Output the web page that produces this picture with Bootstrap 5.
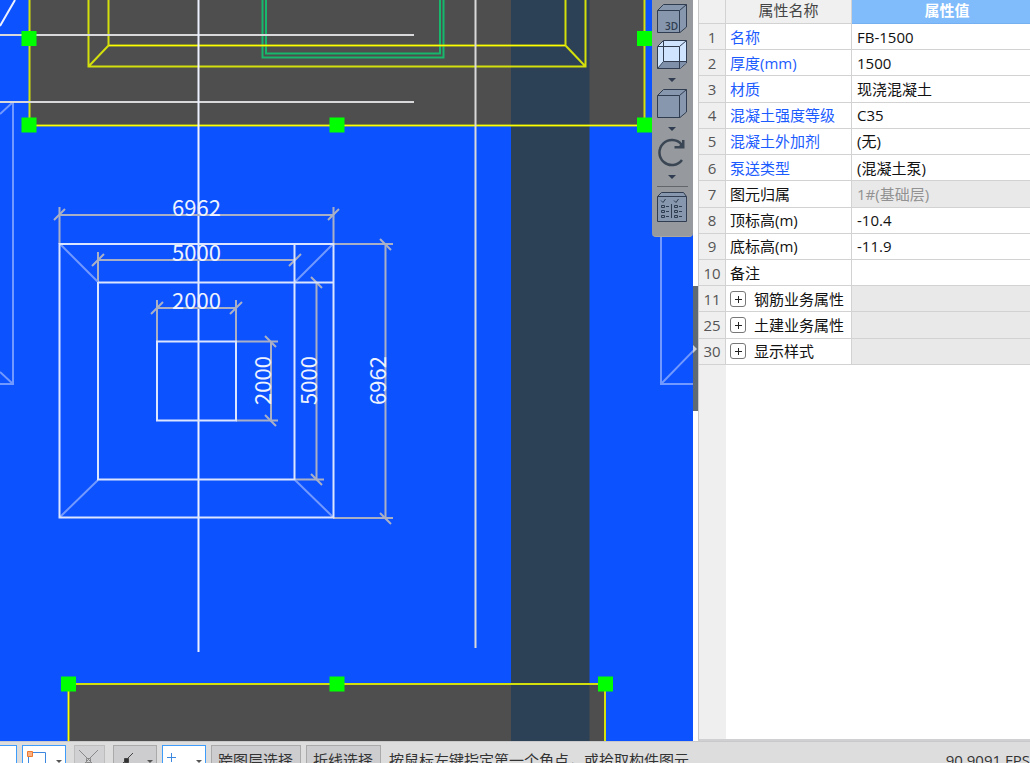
<!DOCTYPE html>
<html lang="zh-CN">
<head>
<meta charset="utf-8">
<meta name="viewport" content="width=device-width, initial-scale=1">
<title>属性编辑</title>
<link rel="stylesheet" href="https://cdn.jsdelivr.net/npm/bootstrap@5.3.0/dist/css/bootstrap.min.css">
<style>
body{font-family:"Open Sans","Noto Sans CJK SC",sans-serif;font-size:15px;line-height:20px;color:#111;background:#fff}
.drawing{background:#0c52ff;min-width:0}
.drawing>svg text{font-family:"Noto Sans CJK SC",sans-serif;font-size:22px;fill:#eef3ff}
.view-tools{top:0;right:0;width:41px;background:#96999d;border-radius:0 0 4px 4px;padding-bottom:8px;border-bottom:1px solid #aaa79f}
.view-tools button,.expander,.snap{border:0;background:none;padding:0}
.view-tools button{display:block;width:41px}
.view-tools svg{display:block}
.view-tools text{font-family:"Open Sans",sans-serif;font-size:10px;font-weight:600;fill:#303d50;stroke:none}
.view-tools hr{margin:2px 5px 0;border-top:1px solid #62666b;opacity:1}
.splitter{width:5px;padding-bottom:44px}
.splitter button{border:0;padding:0;width:5px;height:125px;background:#5f6974}
.splitter svg{display:block}
.props{width:332px;border-left:1px solid #c8c8c8;border-bottom:2px solid #d0d0d2;background:linear-gradient(90deg,#efefef 27px,#fff 27px)}
.prop-grid{table-layout:fixed;width:344px;height:365px;border-collapse:separate;border-spacing:0}
.prop-grid th,.prop-grid td{border-right:1px solid #d2d2d2;border-bottom:1px solid #d2d2d2;padding:0 5px;font-weight:400;white-space:nowrap;height:26px;vertical-align:middle}
.prop-grid thead th{height:24px;padding-bottom:3px;text-align:center;background:#f0f0f0;color:#444}
.prop-grid thead th:last-child{background:#80bbfb;color:#fff;font-weight:700;border-color:#74b0f2}
.prop-grid tbody th{background:#efefef;color:#555;text-align:center;padding:0}
.prop-grid td:nth-child(2){background:#fff;padding-left:4px}
.prop-grid td:last-child{border-right:0}
.key-prop{color:#1c5cff}
.prop-grid .locked{background:#e9e9e9;color:#929292}
.expander{width:16px;height:16px;border:1px solid #777;border-radius:3px;background:#fff}
.expander svg{display:block}
.status{height:22px;background:#ddddde;padding-top:3px;border-top:1px solid #c9c9cb;white-space:nowrap;color:#333}
.snap{height:30px;border:1px solid #aaa;background:#cdcdcf;flex:none;color:#333}
.snap.on{background:#fff;border:1px solid #3e9dfa}
.snap.off{border-color:#bdbdbd;background:#d1d1d3}
.snap svg{display:block}
.w-drop{width:44px}.w-icon{width:31px}.w-edge{width:17px;border-left:0!important}
.snap-text{padding:0 7px 0 6px}
.msg{line-height:30px}
.g5{gap:5px}.g8{gap:8px}
</style>
<script src="https://cdn.jsdelivr.net/npm/bootstrap@5.3.0/dist/js/bootstrap.bundle.min.js"></script>
</head>
<body class="d-flex flex-column vh-100 overflow-hidden">
<main class="d-flex flex-grow-1 overflow-hidden">
  <section class="drawing flex-grow-1 position-relative overflow-hidden" aria-label="绘图区">
    <svg width="100%" height="100%" class="d-block" fill="none" stroke-width="2">
      <path fill="#4e4e4e" d="M29 0H645V125H29ZM69 684H605V2000H69Z"/>
      <rect x="511" y="0" width="78.500" height="100%" fill="#2c4056"/>
      <!-- neighbouring footings -->
      <g stroke="#7299ff">
        <path d="M13 102V384H0M0 114L13 102M0 372L13 384M661 230V384H693M661 384L696 348"/>
      </g>
      <!-- sump outlines -->
      <g stroke="#17b76c"><path d="M262.500 0V57.500H443.500V0M266 0V53.500H440V0"/></g>
      <g stroke="#d4e00c">
        <path d="M29.500 0V125.500H644.500V0M88.500 0V66.500H585.500V0M108.500 0V45.500H565.500V0M108.500 45.500L88.500 66.500M565.500 45.500L585.500 66.500M68.500 741V684H605V2000M68.500 741V2000"/>
      </g>
      <g stroke="#ffff00" stroke-width="1"><path d="M109 45.500H565M30 125.500H644M68.500 684V2000"/></g>
      <!-- axes -->
      <g stroke="#d9d9dc"><path d="M0 35H414M0 102H414M475.500 0V648"/></g>
      <path stroke="#eef1ff" d="M198.500 0V652M0 26L15 0"/>
      <!-- dimension lines -->
      <g stroke="#a9b0c6">
        <path d="M59.500 207V244M59.500 215H333.500V207V244M98 252V282M98 260H295M157 300V341M157 308H236M236 300V341M236 341.500H278M236 420.500H278M271 341V420M316.500 282V479M295 479.500H324M333 244H393M333 518H393M385.500 244V518"/>
        <path d="M54 220L65 209M328 220L339 209M92 266L104 254M289 266L301 254M151 314L163 302M230 314L242 302M265 336L276 347M265 415L276 426M311 277L322 288M311 474L322 485M380 239L391 250M380 513L391 524"/>
      </g>
      <path stroke="#7299ff" d="M60 244L98 282M333 244L295 282M98 480L60 517M295 480L333 517"/>
      <path stroke="#dce5ff" d="M59.500 244H333.500V517.500H59.500ZM98 282.500H333M294.500 244V479.500H98V282M157 341.500H236V420.500H157Z"/>
      <g stroke="none">
        <text x="172" y="216">6962</text><text x="172" y="261">5000</text><text x="172" y="309">2000</text>
        <text transform="translate(271 405) rotate(-90)">2000</text>
        <text transform="translate(317 405) rotate(-90)">5000</text>
        <text transform="translate(386 405) rotate(-90)">6962</text>
      </g>
      <path fill="#00ff00" d="M21.500 31h15v15h-15zM21.500 117.500h15v15h-15zM329.500 117.500h15v15h-15zM637 31h15v15h-15zM637 117.500h15v15h-15zM61 676.500h15v15h-15zM329.500 676.500h15v15h-15zM598 676.500h15v15h-15z"/>
    </svg>
    <div class="view-tools position-absolute">
      <button type="button" aria-label="三维"><svg width="41" height="37" stroke="#303d50" fill="#8697ae"><path d="M5.500 10.500L11.500 4.500H34.500V27L28 32.500H5.500ZM5.500 10.500H27.500V32.500M27.500 10.500L34.500 4.500"/><text x="13" y="30">3D</text></svg></button>
      <button type="button" aria-label="线框"><svg width="41" height="49" stroke="#303d50" fill="#cfe4ff"><path d="M5.500 9.500L11.500 3.500H34.500V26L28 31.500H5.500Z"/><path fill="#7f91aa" stroke="none" d="M6 31L12 24.500H34V26L28 31Z"/><path fill="none" d="M5.500 9.500H27.500V31.500M27.500 9.500L34.500 3.500M11.500 3.500V24.500L5.500 31.500M11.500 24.500H34.500"/><path stroke="none" fill="#303d50" d="M16 41H24L20 45Z"/></svg></button>
      <button type="button" aria-label="实体"><svg width="41" height="49" stroke="#303d50" fill="#8697ae"><path d="M5.500 9.500L11.500 3.500H34.500V26L28 31.500H5.500ZM5.500 9.500H27.500V31.500M27.500 9.500L34.500 3.500"/><path stroke="none" fill="#303d50" d="M16 41H24L20 45Z"/></svg></button>
      <button type="button" aria-label="旋转"><svg width="41" height="49" fill="none" stroke="#3a4654"><path stroke-width="2.500" d="M29.500 9.500A12.500 12.500 0 1 0 30 25"/><path stroke="none" fill="#3a4654" d="M32.500 5V13.500H22.500V11H27L30 8V5Z"/><path stroke="none" fill="#303d50" d="M16 40H24L20 44Z"/></svg></button>
      <hr>
      <button type="button" aria-label="显示设置"><svg width="41" height="41" stroke="#303d50" fill="#8697ae"><path d="M5.500 9.500L9.500 5.500H31.500L34.500 9.500V34.500H5.500ZM5.500 9.500H34.500"/><g fill="none"><path d="M9 13.500L11 15.500L13.500 12M22 13.500L24 15.500L26.500 12M19.500 17V31M9.500 18.500h3v2h-3zM9.500 23.500h3v2h-3zM9.500 28.500h3v2h-3zM22.500 18.500h3v2h-3zM22.500 23.500h3v2h-3zM22.500 28.500h3v2h-3zM14 19.500h3M14 24.500h3M14 29.500h3M27 19.500h3M27 24.500h3M27 29.500h3"/></g></svg></button>
    </div>
  </section>
  <div class="splitter d-flex align-items-center flex-shrink-0">
    <button type="button" aria-label="折叠面板"><svg width="5" height="12"><path fill="#c9cdd2" d="M0 2L4 6L0 10Z"/></svg></button>
  </div>
  <aside class="props flex-shrink-0 overflow-hidden">
    <table class="prop-grid">
      <colgroup><col style="width:27px"><col style="width:126px"><col></colgroup>
      <thead><tr><th></th><th>属性名称</th><th>属性值</th></tr></thead>
      <tbody>
        <tr><th>1</th><td class="key-prop">名称</td><td>FB-1500</td></tr>
        <tr><th>2</th><td class="key-prop">厚度(mm)</td><td>1500</td></tr>
        <tr><th>3</th><td class="key-prop">材质</td><td>现浇混凝土</td></tr>
        <tr><th>4</th><td class="key-prop">混凝土强度等级</td><td>C35</td></tr>
        <tr><th>5</th><td class="key-prop">混凝土外加剂</td><td>(无)</td></tr>
        <tr><th>6</th><td class="key-prop">泵送类型</td><td>(混凝土泵)</td></tr>
        <tr><th>7</th><td>图元归属</td><td class="locked">1#(基础层)</td></tr>
        <tr><th>8</th><td>顶标高(m)</td><td>-10.4</td></tr>
        <tr><th>9</th><td>底标高(m)</td><td>-11.9</td></tr>
        <tr><th>10</th><td>备注</td><td></td></tr>
        <tr><th>11</th><td><div class="d-flex align-items-center g8"><button type="button" class="expander" aria-label="展开"><svg width="14" height="14" stroke="#222"><path d="M4 7.500H11M7.500 4V11"/></svg></button>钢筋业务属性</div></td><td class="locked"></td></tr>
        <tr><th>25</th><td><div class="d-flex align-items-center g8"><button type="button" class="expander" aria-label="展开"><svg width="14" height="14" stroke="#222"><path d="M4 7.500H11M7.500 4V11"/></svg></button>土建业务属性</div></td><td class="locked"></td></tr>
        <tr><th>30</th><td><div class="d-flex align-items-center g8"><button type="button" class="expander" aria-label="展开"><svg width="14" height="14" stroke="#222"><path d="M4 7.500H11M7.500 4V11"/></svg></button>显示样式</div></td><td class="locked"></td></tr>
      </tbody>
    </table>
  </aside>
</main>
<footer class="status d-flex flex-shrink-0 align-items-start overflow-hidden g8">
  <div class="d-flex g5">
    <button type="button" class="snap on w-edge" aria-label="点"></button>
    <button type="button" class="snap on w-drop" aria-label="矩形"><svg width="42" height="28" fill="none" stroke="#3c87e0"><path d="M5.500 28V6.500H22.500V28"/><path fill="#f7b183" stroke="#ee7a30" d="M4.500 5.500h5v5h-5z"/><path stroke="none" fill="#555" d="M33 14H39L36 17Z"/></svg></button>
  </div>
  <button type="button" class="snap off w-icon" aria-label="交点"><svg width="29" height="28" fill="none" stroke="#888"><path d="M4 4L25 25M23 4L2 25M11.500 12.500h4v4h-4z"/></svg></button>
  <div class="d-flex g5">
    <button type="button" class="snap w-drop" aria-label="中点"><svg width="42" height="28" stroke="#444"><path d="M19 7L6 20"/><path fill="#333" d="M10.500 12.500h4v4h-4z"/><path stroke="none" fill="#555" d="M33 14H39L36 17Z"/></svg></button>
    <button type="button" class="snap on w-drop" aria-label="偏移"><svg width="42" height="28" stroke="#3c87e0" fill="none"><path d="M4 11.500H13M8.500 7V16M12 17.500H24"/><path stroke="none" fill="#555" d="M33 14H39L36 17Z"/></svg></button>
    <button type="button" class="snap snap-text">跨图层选择</button>
    <button type="button" class="snap snap-text">折线选择</button>
  </div>
  <span class="msg">按鼠标左键指定第一个角点，或拾取构件图元</span>
  <span class="msg ms-auto">90.9091 FPS</span>
</footer>
</body>
</html>
